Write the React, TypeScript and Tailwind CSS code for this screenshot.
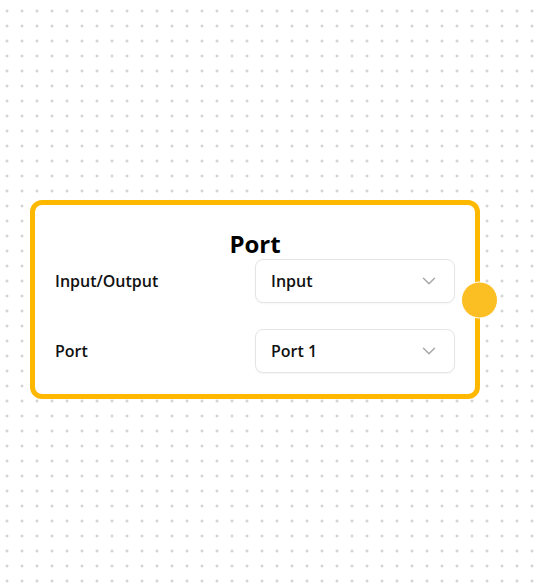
import React from "react";

function Chevron() {
  return (
    <svg width="22" height="22" viewBox="0 0 24 24" fill="none" stroke="#a8a8a8" strokeWidth="1.6" strokeLinecap="round" strokeLinejoin="round">
      <path d="m6 9 6 6 6-6" />
    </svg>
  );
}

function Select({ value }: { value: string }) {
  return (
    <div className="flex h-[44px] items-center justify-between rounded-[8px] border border-[#e5e5e5] bg-white pl-[15px] pr-[14px] shadow-[0_1px_2px_rgba(0,0,0,0.04)]">
      <span className="text-[16px] font-semibold text-[#111]">{value}</span>
      <Chevron />
    </div>
  );
}

export default function App() {
  return (
    <div
      className="relative h-[588px] w-full overflow-hidden bg-white bg-[radial-gradient(circle,#c6c6c6_1px,transparent_1.2px)] bg-[size:15px_15px] bg-[position:-0.5px_3.5px]"
      style={{ fontFamily: '"Open Sans", "Noto Sans", sans-serif' }}
    >
      <div className="absolute left-[30px] top-[200px] w-[450px] rounded-[12px] border-[5px] border-[#ffb800] bg-white px-[20px] pb-[21px] pt-[23px]">
        <div className="text-center text-[24px] font-bold leading-[31px] text-black">Port</div>
        <div className="grid grid-cols-2 gap-y-[26px]">
          <div className="flex items-center text-[16px] font-semibold text-[#111]">Input/Output</div>
          <Select value="Input" />
          <div className="flex items-center text-[16px] font-semibold text-[#111]">Port</div>
          <Select value="Port 1" />
        </div>
        <div className="absolute right-[-23px] top-1/2 h-[37px] w-[37px] -translate-y-1/2 rounded-full border border-white bg-[#fbbf24]" />
      </div>
    </div>
  );
}
